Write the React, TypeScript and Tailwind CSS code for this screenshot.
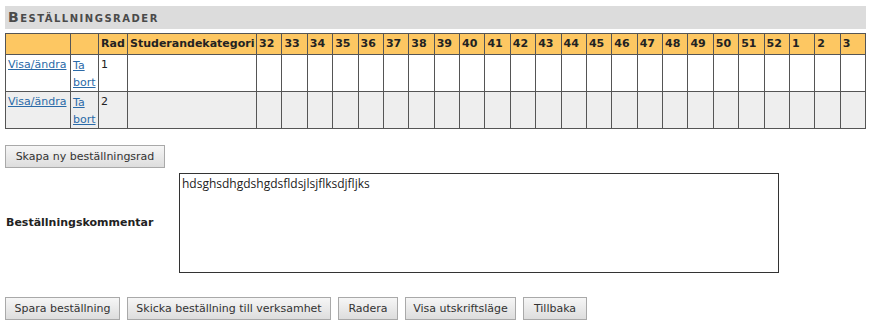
import React from 'react';

const weeks = ['32', '33', '34', '35', '36', '37', '38', '39', '40', '41', '42', '43', '44', '45', '46', '47', '48', '49', '50', '51', '52', '1', '2', '3'];

const rows = [
  { nr: 1, bg: 'bg-white' },
  { nr: 2, bg: 'bg-[#eeeeee]' },
];

const btn =
  'h-[23px] px-[4px] whitespace-nowrap border border-[#a9a9a9] bg-gradient-to-b from-[#f6f6f6] to-[#dddddd] text-[11px] text-[#333] leading-none';

const App: React.FC = () => {
  return (
    <div className="w-[878px] h-[322px] bg-white font-['DejaVu_Sans',Verdana,sans-serif] text-[11px] text-[#222] pl-[5px] pt-[6px]">
      {/* Rubrik */}
      <div className="w-[861px] h-[23px] bg-[#dcdcdc] flex items-center pl-[3px]">
        <span className="font-bold text-[14px] text-[#4a4a4a] tracking-[1.5px] [font-variant:small-caps]">Beställningsrader</span>
      </div>

      {/* Tabell */}
      <table className="mt-[4px] w-[861px] table-fixed border-collapse border border-[#555]">
        <colgroup>
          <col className="w-[65px]" />
          <col className="w-[28px]" />
          <col className="w-[29px]" />
          <col className="w-[129px]" />
          {weeks.map((w) => (
            <col key={w} />
          ))}
        </colgroup>
        <thead>
          <tr className="h-[21px] bg-[#fdc762] font-bold text-left">
            <th className="border border-[#555]"></th>
            <th className="border border-[#555]"></th>
            <th className="border border-[#555] px-[2px] text-left">Rad</th>
            <th className="border border-[#555] px-[2px] text-left">Studerandekategori</th>
            {weeks.map((w) => (
              <th key={w} className="border border-[#555] px-[2px] text-left">
                {w}
              </th>
            ))}
          </tr>
        </thead>
        <tbody>
          {rows.map((r) => (
            <tr key={r.nr} className={`h-[37px] ${r.bg}`}>
              <td className="border border-[#555] px-[2px] align-top pt-[2px]">
                <a href="#" className="text-[#2a6aa8] underline">Visa/ändra</a>
              </td>
              <td className="border border-[#555] px-[2px] align-top pt-[2px] leading-[17px]">
                <a href="#" className="text-[#2a6aa8] underline">Ta bort</a>
              </td>
              <td className="border border-[#555] px-[2px] align-top pt-[2px]">{r.nr}</td>
              <td className="border border-[#555]"></td>
              {weeks.map((w) => (
                <td key={w} className="border border-[#555]"></td>
              ))}
            </tr>
          ))}
        </tbody>
      </table>

      <div className="mt-[16px] flex">
        <button className={`${btn} w-[160px]`}>Skapa ny beställningsrad</button>
      </div>

      {/* Kommentar */}
      <div className="mt-[5px] flex items-center">
        <label className="w-[174px] font-bold text-[11px] text-[#222] pl-[1px]">Beställningskommentar</label>
        <textarea
          className="block w-[600px] h-[100px] border border-[#333] px-[2px] py-[1px] text-[12px] font-['Open_Sans',sans-serif] text-[#222] resize-none outline-none"
          defaultValue="hdsghsdhgdshgdsfldsjlsjflksdjfljks"
        />
      </div>

      {/* Knappar */}
      <div className="mt-[24px] flex gap-[7px]">
        <button className={`${btn} w-[115px]`}>Spara beställning</button>
        <button className={`${btn} w-[204px]`}>Skicka beställning till verksamhet</button>
        <button className={`${btn} w-[60px]`}>Radera</button>
        <button className={`${btn} w-[111px]`}>Visa utskriftsläge</button>
        <button className={`${btn} w-[64px]`}>Tillbaka</button>
      </div>
    </div>
  );
};

export default App;
